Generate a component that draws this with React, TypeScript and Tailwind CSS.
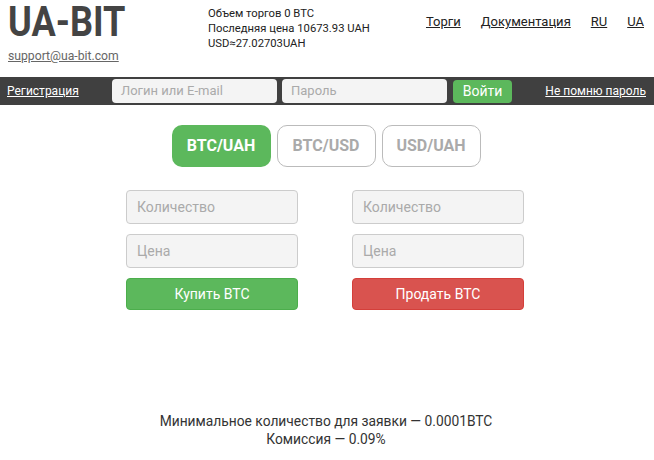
import React from "react";

export default function App() {
  return (
    <div className="w-[654px] h-[460px] bg-white flex flex-col text-[#333]" style={{ fontFamily: "Roboto, 'Liberation Sans', sans-serif" }}>
      {/* Header */}
      <div className="flex h-[77px] pl-2 pr-[10px]">
        <div className="w-[200px] flex flex-col items-start">
          <div className="text-[42px] leading-[44px] font-bold text-[#444] whitespace-nowrap scale-x-[0.86] origin-left">UA-BIT</div>
          <a href="#" className="text-[12.2px] leading-[15px] text-[#666] underline mt-[5px]">support@ua-bit.com</a>
        </div>
        <div className="flex flex-col text-[11.25px] leading-[15px] text-[#222] pt-[6px]">
          <span>Объем торгов 0 BTC</span>
          <span>Последняя цена 10673.93 UAH</span>
          <span>USD≈27.02703UAH</span>
        </div>
        <div className="ml-auto flex items-start gap-[20px] pt-[13px] text-[13px] leading-[18px] text-[#222]">
          <a href="#" className="underline">Торги</a>
          <a href="#" className="underline">Документация</a>
          <a href="#" className="underline">RU</a>
          <a href="#" className="underline">UA</a>
        </div>
      </div>

      {/* Login bar */}
      <div className="h-[28px] bg-[#404040] flex items-center pl-[7px] pr-[8px]">
        <a href="#" className="text-white underline text-[12px] leading-[16px] w-[105px]">Регистрация</a>
        <div className="w-[165px] h-[24px] bg-[#f4f4f4] rounded-[4px] flex items-center pl-[9px] text-[13px] text-[#aaa]">Логин или E-mail</div>
        <div className="w-[165px] h-[24px] bg-[#f4f4f4] rounded-[4px] flex items-center pl-[9px] text-[13px] text-[#aaa] ml-[5px]">Пароль</div>
        <div className="w-[59px] h-[23px] bg-[#5cb85c] rounded-[4px] flex items-center justify-center text-white text-[14px] ml-[6px]">Войти</div>
        <a href="#" className="ml-auto text-white underline text-[12px] leading-[16px]">Не помню пароль</a>
      </div>

      {/* Tabs */}
      <div className="flex justify-center gap-[6px] mt-[20px] pr-[2px]">
        <div className="w-[99px] h-[42px] rounded-[10px] bg-[#5cb85c] flex items-center justify-center text-white font-bold text-[16px]">BTC/UAH</div>
        <div className="w-[99px] h-[42px] rounded-[10px] border border-[#bbb] flex items-center justify-center text-[#aaa] font-bold text-[16px]">BTC/USD</div>
        <div className="w-[99px] h-[42px] rounded-[10px] border border-[#bbb] flex items-center justify-center text-[#aaa] font-bold text-[16px]">USD/UAH</div>
      </div>

      {/* Forms */}
      <div className="flex justify-center gap-[54px] mt-[23px] pr-[4px]">
        <div className="w-[172px] flex flex-col gap-[10px]">
          <div className="h-[34px] bg-[#f4f4f4] border border-[#ccc] rounded-[4px] flex items-center pl-[10px] text-[14px] text-[#aaa]">Количество</div>
          <div className="h-[34px] bg-[#f4f4f4] border border-[#ccc] rounded-[4px] flex items-center pl-[10px] text-[14px] text-[#aaa]">Цена</div>
          <div className="h-[32px] bg-[#5cb85c] border border-[#4cae4c] rounded-[4px] flex items-center justify-center text-white text-[14px]">Купить BTC</div>
        </div>
        <div className="w-[172px] flex flex-col gap-[10px]">
          <div className="h-[34px] bg-[#f4f4f4] border border-[#ccc] rounded-[4px] flex items-center pl-[10px] text-[14px] text-[#aaa]">Количество</div>
          <div className="h-[34px] bg-[#f4f4f4] border border-[#ccc] rounded-[4px] flex items-center pl-[10px] text-[14px] text-[#aaa]">Цена</div>
          <div className="h-[32px] bg-[#d9534f] border border-[#d43f3a] rounded-[4px] flex items-center justify-center text-white text-[14px]">Продать BTC</div>
        </div>
      </div>

      {/* Footer */}
      <div className="mt-auto mb-[12px] flex flex-col items-center text-[13.8px] leading-[18px] text-[#333] pr-[2px]">
        <span>Минимальное количество для заявки — 0.0001BTC</span>
        <span>Комиссия — 0.09%</span>
      </div>
    </div>
  );
}
